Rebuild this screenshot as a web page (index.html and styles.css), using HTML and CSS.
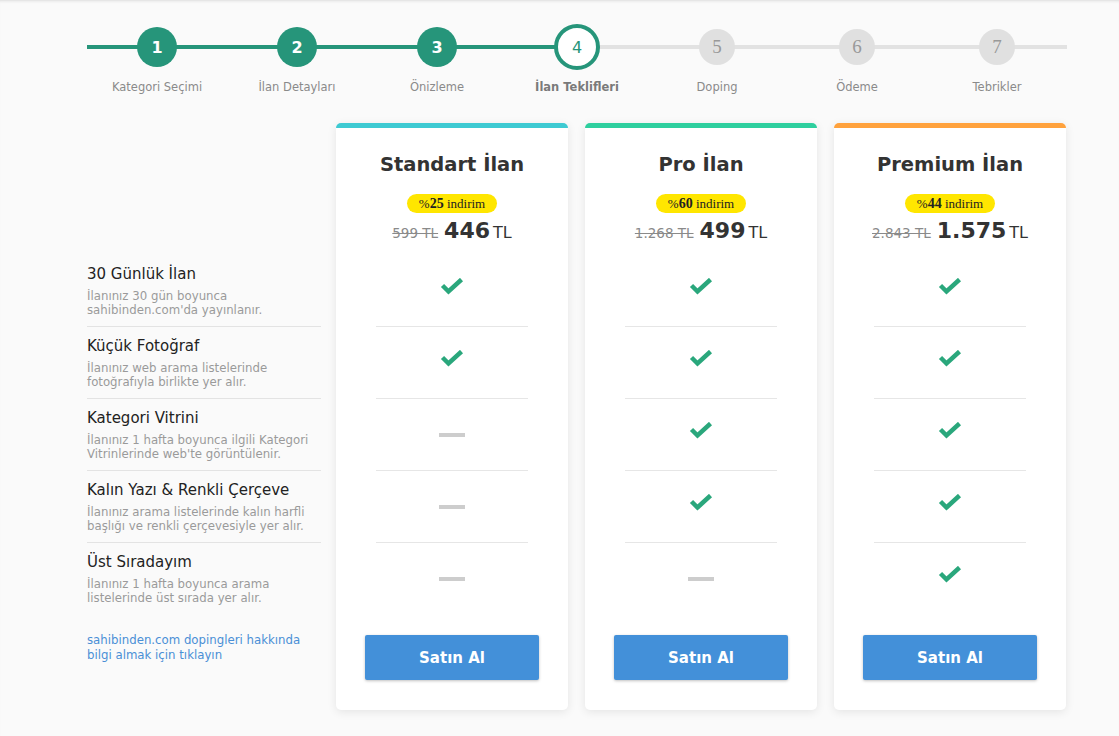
FILE: index.html
```html
<!DOCTYPE html>
<html lang="tr">
<head>
<meta charset="utf-8">
<title>İlan Teklifleri</title>
<link rel="stylesheet" href="styles.css">
</head>
<body>
<div class="page">
  <ol class="stepper">
    <li class="step done"><span class="dot">1</span><span class="label">Kategori Seçimi</span></li>
    <li class="step done"><span class="dot">2</span><span class="label">İlan Detayları</span></li>
    <li class="step done"><span class="dot">3</span><span class="label">Önizleme</span></li>
    <li class="step current"><span class="dot">4</span><span class="label">İlan Teklifleri</span></li>
    <li class="step"><span class="dot">5</span><span class="label">Doping</span></li>
    <li class="step"><span class="dot">6</span><span class="label">Ödeme</span></li>
    <li class="step"><span class="dot">7</span><span class="label">Tebrikler</span></li>
  </ol>

  <div class="offers">
    <div class="features">
      <div class="feature">
        <div class="f-title">30 Günlük İlan</div>
        <div class="f-desc">İlanınız 30 gün boyunca<br>sahibinden.com'da yayınlanır.</div>
      </div>
      <div class="feature">
        <div class="f-title">Küçük Fotoğraf</div>
        <div class="f-desc">İlanınız web arama listelerinde<br>fotoğrafıyla birlikte yer alır.</div>
      </div>
      <div class="feature">
        <div class="f-title">Kategori Vitrini</div>
        <div class="f-desc">İlanınız 1 hafta boyunca ilgili Kategori<br>Vitrinlerinde web'te görüntülenir.</div>
      </div>
      <div class="feature">
        <div class="f-title">Kalın Yazı &amp; Renkli Çerçeve</div>
        <div class="f-desc">İlanınız arama listelerinde kalın harfli<br>başlığı ve renkli çerçevesiyle yer alır.</div>
      </div>
      <div class="feature">
        <div class="f-title">Üst Sıradayım</div>
        <div class="f-desc">İlanınız 1 hafta boyunca arama<br>listelerinde üst sırada yer alır.</div>
      </div>
      <a class="info-link" href="#">sahibinden.com dopingleri hakkında<br>bilgi almak için tıklayın</a>
    </div>

    <div class="card standard">
      <div class="card-head">
        <h2 class="card-title">Standart İlan</h2>
        <span class="badge">%<b>25</b> indirim</span>
        <div class="price"><s class="old">599 TL</s><span class="new">446</span><span class="cur">TL</span></div>
      </div>
      <div class="cells">
        <div class="cell"><svg class="check" viewBox="0 0 24 18"><polyline points="2.5,7.5 8.5,13.5 21.5,1.5"/></svg></div>
        <div class="cell"><svg class="check" viewBox="0 0 24 18"><polyline points="2.5,7.5 8.5,13.5 21.5,1.5"/></svg></div>
        <div class="cell"><span class="dash"></span></div>
        <div class="cell"><span class="dash"></span></div>
        <div class="cell"><span class="dash"></span></div>
      </div>
      <div class="buy"><button class="btn">Satın Al</button></div>
    </div>

    <div class="card pro">
      <div class="card-head">
        <h2 class="card-title">Pro İlan</h2>
        <span class="badge">%<b>60</b> indirim</span>
        <div class="price"><s class="old">1.268 TL</s><span class="new">499</span><span class="cur">TL</span></div>
      </div>
      <div class="cells">
        <div class="cell"><svg class="check" viewBox="0 0 24 18"><polyline points="2.5,7.5 8.5,13.5 21.5,1.5"/></svg></div>
        <div class="cell"><svg class="check" viewBox="0 0 24 18"><polyline points="2.5,7.5 8.5,13.5 21.5,1.5"/></svg></div>
        <div class="cell"><svg class="check" viewBox="0 0 24 18"><polyline points="2.5,7.5 8.5,13.5 21.5,1.5"/></svg></div>
        <div class="cell"><svg class="check" viewBox="0 0 24 18"><polyline points="2.5,7.5 8.5,13.5 21.5,1.5"/></svg></div>
        <div class="cell"><span class="dash"></span></div>
      </div>
      <div class="buy"><button class="btn">Satın Al</button></div>
    </div>

    <div class="card premium">
      <div class="card-head">
        <h2 class="card-title">Premium İlan</h2>
        <span class="badge">%<b>44</b> indirim</span>
        <div class="price"><s class="old">2.843 TL</s><span class="new">1.575</span><span class="cur">TL</span></div>
      </div>
      <div class="cells">
        <div class="cell"><svg class="check" viewBox="0 0 24 18"><polyline points="2.5,7.5 8.5,13.5 21.5,1.5"/></svg></div>
        <div class="cell"><svg class="check" viewBox="0 0 24 18"><polyline points="2.5,7.5 8.5,13.5 21.5,1.5"/></svg></div>
        <div class="cell"><svg class="check" viewBox="0 0 24 18"><polyline points="2.5,7.5 8.5,13.5 21.5,1.5"/></svg></div>
        <div class="cell"><svg class="check" viewBox="0 0 24 18"><polyline points="2.5,7.5 8.5,13.5 21.5,1.5"/></svg></div>
        <div class="cell"><svg class="check" viewBox="0 0 24 18"><polyline points="2.5,7.5 8.5,13.5 21.5,1.5"/></svg></div>
      </div>
      <div class="buy"><button class="btn">Satın Al</button></div>
    </div>
  </div>
</div>
</body>
</html>
```

FILE: styles.css
```css
* { box-sizing: border-box; }

html, body {
  margin: 0;
  height: 100%;
}

body {
  background: #fafafa;
  font-family: "DejaVu Sans", Verdana, sans-serif;
  color: #333;
  overflow: hidden;
}

.page {
  min-height: 100%;
  padding: 24px 0 0 87px;
  box-shadow: inset 0 3px 3px -2px #dcdcdc;
}

/* ---------- stepper ---------- */
.stepper {
  list-style: none;
  margin: 0;
  padding: 0;
  display: grid;
  grid-template-columns: repeat(7, 140px);
}

.step {
  position: relative;
  display: flex;
  flex-direction: column;
  align-items: center;
}

.step::before {
  content: "";
  position: absolute;
  left: 0;
  right: 0;
  top: 21px;
  height: 4px;
  background: #e2e2e2;
}

.step.done::before { background: #26957a; }
.step.current::before {
  background: linear-gradient(to right, #26957a 50%, #e2e2e2 50%);
}

.dot {
  position: relative;
  z-index: 1;
  width: 36px;
  height: 36px;
  margin: 5px 0;
  border-radius: 50%;
  background: #e0e0e0;
  color: #999;
  display: flex;
  align-items: center;
  justify-content: center;
  font-family: "Liberation Serif", "Times New Roman", serif;
  font-size: 19px;
}

.step.done .dot {
  width: 40px;
  height: 40px;
  margin: 3px 0;
  background: #26957a;
  color: #fff;
  font-family: "DejaVu Sans", Verdana, sans-serif;
  font-weight: bold;
  font-size: 16px;
}

.step.current .dot {
  width: 46px;
  height: 46px;
  margin: 0;
  background: #fff;
  border: 4px solid #26957a;
  color: #26957a;
  font-family: "DejaVu Sans", Verdana, sans-serif;
  font-size: 16px;
}

.label {
  margin-top: 9px;
  font-size: 11.5px;
  line-height: 16px;
  color: #8a8a8a;
  white-space: nowrap;
}

.step.current .label {
  font-weight: bold;
  color: #7a7a7a;
}

/* ---------- offers ---------- */
.offers {
  display: flex;
  align-items: flex-start;
  margin-top: 28px;
}

.features {
  width: 234px;
  padding-top: 132px;
  margin-right: 15px;
}

.feature {
  height: 72px;
  padding-top: 10px;
  border-bottom: 1px solid #e3e3e3;
}

.feature:nth-child(5) { border-bottom-color: transparent; }

.f-title {
  font-size: 15px;
  line-height: 18px;
  color: #222;
  white-space: nowrap;
}

.f-desc {
  margin-top: 6px;
  font-size: 11.75px;
  line-height: 14px;
  color: #9a9a9a;
  white-space: nowrap;
}

.info-link {
  display: block;
  margin-top: 18px;
  font-size: 11.75px;
  line-height: 15px;
  color: #4a8fd6;
  text-decoration: none;
  white-space: nowrap;
}

/* ---------- cards ---------- */
.card {
  width: 232px;
  margin-right: 17px;
  background: #fff;
  border-top: 5px solid #3ecad2;
  border-radius: 5px;
  box-shadow: 0 2px 10px rgba(0, 0, 0, 0.09);
}

.card.pro { border-top-color: #2ecf9e; }
.card.premium { border-top-color: #ffa23d; }

.card-head {
  height: 127px;
  padding-top: 23px;
  display: flex;
  flex-direction: column;
  align-items: center;
}

.card-title {
  margin: 0;
  font-size: 19.5px;
  line-height: 28px;
  font-weight: bold;
  color: #333;
  white-space: nowrap;
}

.badge {
  margin-top: 15px;
  height: 19px;
  width: 90px;
  border-radius: 10px;
  background: #ffe600;
  font-family: "Liberation Serif", "Times New Roman", serif;
  font-size: 13px;
  line-height: 19px;
  text-align: center;
  color: #222;
}

.badge b { font-size: 14px; }

.price {
  margin-top: 6px;
  display: flex;
  align-items: baseline;
  line-height: 24px;
  white-space: nowrap;
}

.old {
  font-size: 13.5px;
  color: #8a8a8a;
  margin-right: 6px;
}

.new {
  font-size: 22px;
  font-weight: bold;
  color: #333;
  margin-right: 3px;
}

.cur {
  font-size: 16px;
  color: #333;
}

.cells { padding: 0 40px; }

.cell {
  height: 72px;
  border-bottom: 1px solid #e6e6e6;
  display: flex;
  align-items: center;
  justify-content: center;
}

.cell:last-child { border-bottom-color: transparent; }

.check {
  width: 24px;
  height: 18px;
  margin-bottom: 8px;
  fill: none;
  stroke: #2aa77c;
  stroke-width: 4.5;
}

.dash {
  width: 26px;
  height: 4px;
  background: #cdcdcd;
}

.buy {
  padding: 20px 0 30px;
  display: flex;
  justify-content: center;
}

.btn {
  width: 174px;
  height: 45px;
  border: 0;
  border-radius: 2px;
  background: #4390d9;
  color: #fff;
  font-family: "DejaVu Sans", Verdana, sans-serif;
  font-size: 15px;
  font-weight: bold;
  box-shadow: 0 1px 3px rgba(0, 0, 0, 0.25);
}
```
